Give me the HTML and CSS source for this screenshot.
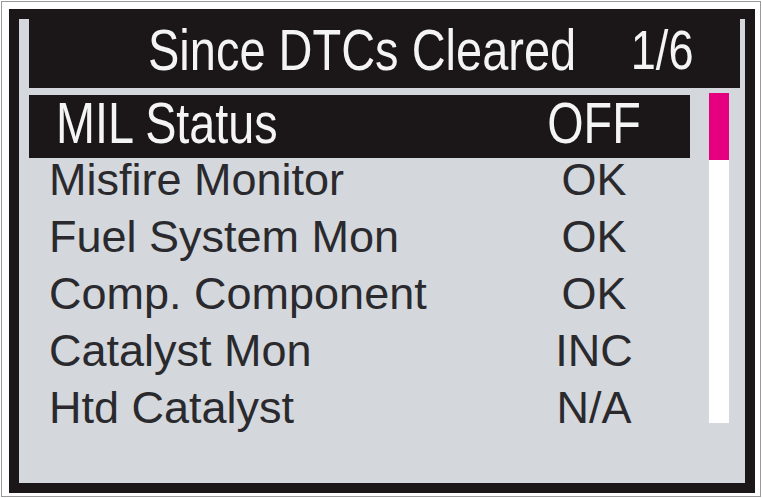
FILE: index.html
```html
<!DOCTYPE html>
<html>
<head>
<meta charset="utf-8">
<link rel="stylesheet" href="styles.css">
</head>
<body>
<div class="page">
  <div class="frame">
    <div class="title-bar">
      <span class="title-text narrow-left">Since DTCs Cleared</span>
      <span class="title-page narrow-right">1/6</span>
    </div>
    <div class="main">
      <div class="list">
        <div class="row row-selected">
          <span class="label"><span class="narrow-left">MIL Status</span></span>
          <span class="value"><span class="narrow-center">OFF</span></span>
        </div>
        <div class="row">
          <span class="label">Misfire Monitor</span>
          <span class="value">OK</span>
        </div>
        <div class="row">
          <span class="label">Fuel System Mon</span>
          <span class="value">OK</span>
        </div>
        <div class="row">
          <span class="label">Comp. Component</span>
          <span class="value">OK</span>
        </div>
        <div class="row">
          <span class="label">Catalyst Mon</span>
          <span class="value">INC</span>
        </div>
        <div class="row">
          <span class="label">Htd Catalyst</span>
          <span class="value">N/A</span>
        </div>
      </div>
      <div class="scrollbar">
        <div class="scroll-thumb"></div>
      </div>
    </div>
  </div>
</div>
</body>
</html>
```
FILE: styles.css
```css
* { box-sizing: border-box; }
html, body {
  margin: 0;
  padding: 0;
  background: #ffffff;
  overflow: hidden;
}
.page {
  margin: 1px;
  width: 760px;
  height: 496px;
  border: 1px solid #9a9a9a;
  padding: 7px 0 0 7px;
  background: #ffffff;
}
.frame {
  width: 746px;
  height: 484px;
  border: 10px solid #1b1718;
  background: #d4d7db;
  display: flex;
  flex-direction: column;
}
.narrow-left,
.narrow-right,
.narrow-center {
  display: inline-block;
  transform: scaleX(0.82);
}
.narrow-left { transform-origin: left center; }
.narrow-right { transform-origin: right center; }
.narrow-center { transform-origin: center center; }
.title-bar {
  height: 69px;
  margin: 0 5px 0 10px;
  background: #1b1718;
  color: #f4f4f4;
  font-family: "Liberation Sans", Arial, sans-serif;
  font-size: 58px;
  line-height: 62px;
  display: flex;
  padding: 0 47px 0 119px;
  white-space: nowrap;
}
.title-text {
  flex: none;
  width: 430px;
  transform: scaleX(0.81);
}
.title-page {
  flex: none;
  margin-left: auto;
  font-size: 55px;
}
.main {
  display: flex;
  margin-top: 5px;
  padding-left: 10px;
}
.list {
  width: 661px;
  padding-top: 2px;
}
.row {
  display: grid;
  grid-template-columns: 1fr 120px;
  padding: 0 36px 0 20px;
  height: 57px;
  line-height: 43px;
  font-family: "Liberation Sans", Arial, sans-serif;
  font-size: 45px;
  color: #2a2a2e;
  white-space: nowrap;
}
.row-selected {
  height: 63px;
  line-height: 56px;
  padding-left: 27px;
  background: #1b1718;
  color: #f4f4f4;
  font-size: 57px;
}
.value {
  text-align: center;
}
.scrollbar {
  width: 20px;
  height: 330px;
  margin-left: 19px;
  background: #ffffff;
}
.scroll-thumb {
  height: 67px;
  background: #e4007f;
}
```
